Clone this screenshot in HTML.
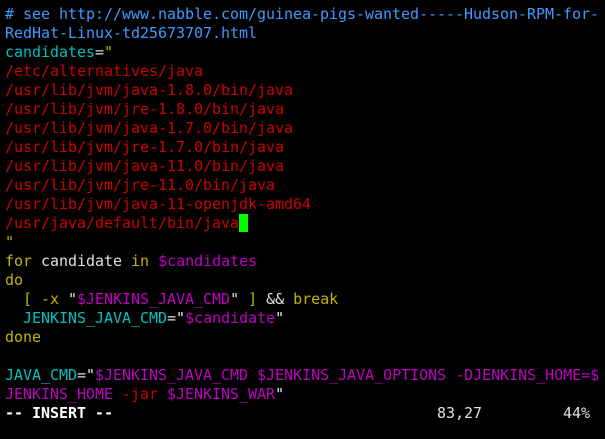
<!DOCTYPE html>
<html><head><style>
html,body{margin:0;padding:0;background:#000;width:605px;height:439px;overflow:hidden}
pre{margin:0;position:absolute;left:5px;top:5px;font-family:"DejaVu Sans Mono",monospace;font-size:15px;line-height:19px;color:#e0e0e0;letter-spacing:-0.03px}
.b{color:#3d9bff}.c{color:#00c0c0}.r{color:#cc0000}.y{color:#c4b400}.m{color:#c000c0}.w{color:#e8e8e8}
.cur{background:#00ff00;color:#000}
.bold{font-weight:bold;color:#fff}
</style></head><body>
<pre><span class="b"># see http://www.nabble.com/guinea-pigs-wanted-----Hudson-RPM-for-
RedHat-Linux-td25673707.html</span>
<span class="c">candidates</span>=<span class="y">"</span>
<span class="r">/etc/alternatives/java
/usr/lib/jvm/java-1.8.0/bin/java
/usr/lib/jvm/jre-1.8.0/bin/java
/usr/lib/jvm/java-1.7.0/bin/java
/usr/lib/jvm/jre-1.7.0/bin/java
/usr/lib/jvm/java-11.0/bin/java
/usr/lib/jvm/jre-11.0/bin/java
/usr/lib/jvm/java-11-openjdk-amd64
/usr/java/default/bin/java</span><span class="cur"> </span>
<span class="y">"</span>
<span class="y">for</span> candidate <span class="y">in</span> <span class="m">$candidates</span>
<span class="y">do</span>
  <span class="y">[ -x </span><span class="w">"</span><span class="m">$JENKINS_JAVA_CMD</span><span class="w">"</span> <span class="y">]</span> &amp;&amp; <span class="y">break</span>
  <span class="c">JENKINS_JAVA_CMD</span>=<span class="w">"</span><span class="m">$candidate</span><span class="w">"</span>
<span class="y">done</span>

<span class="c">JAVA_CMD</span>=<span class="w">"</span><span class="m">$JENKINS_JAVA_CMD $JENKINS_JAVA_OPTIONS -DJENKINS_HOME=$
JENKINS_HOME </span><span class="r">-jar</span> <span class="m">$JENKINS_WAR</span><span class="w">"</span>
<span class="bold">-- INSERT --</span>                                    83,27         44%</pre>
</body></html>
